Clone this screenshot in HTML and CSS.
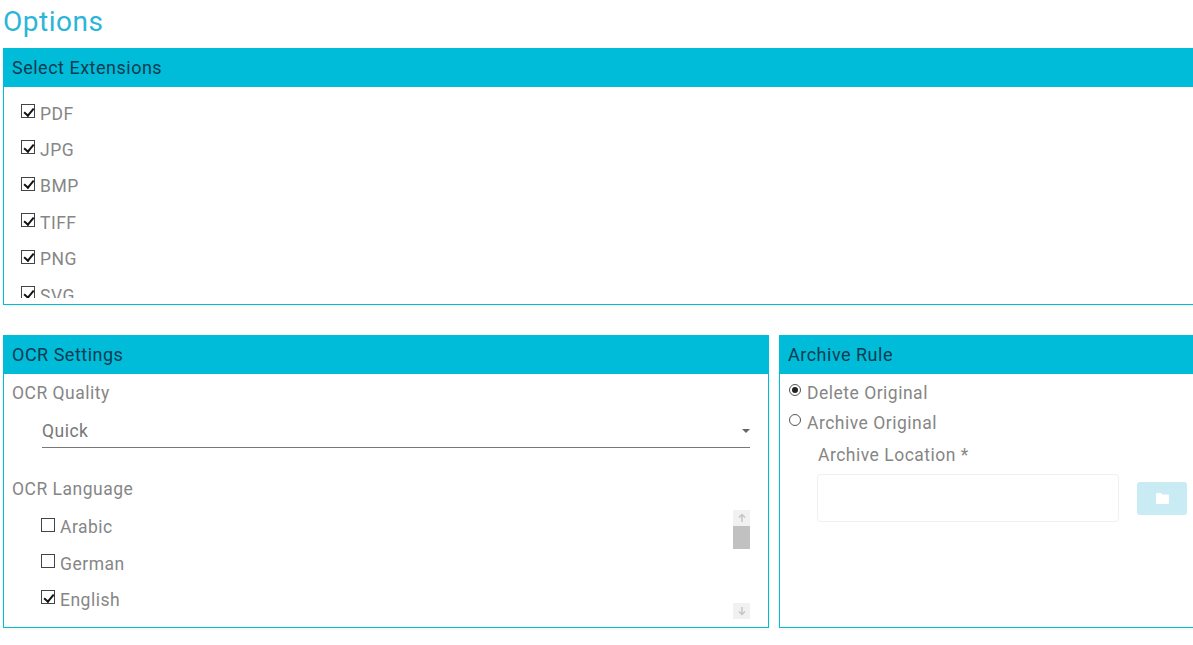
FILE: index.html
```html
<!DOCTYPE html>
<html lang="en">
<head>
  <meta charset="UTF-8">
  <meta name="viewport" content="width=device-width, initial-scale=1.0">
  <title>Options</title>
  <link rel="stylesheet" href="styles.css">
</head>
<body>

<div class="page">
  <h1 class="page-title">Options</h1>

  <!-- Extensions -->
  <section class="panel">
    <div class="panel-header">Select Extensions</div>
    <div class="extension-list">
      <label class="option"><input type="checkbox" checked> PDF</label>
      <label class="option"><input type="checkbox" checked> JPG</label>
      <label class="option"><input type="checkbox" checked> BMP</label>
      <label class="option"><input type="checkbox" checked> TIFF</label>
      <label class="option"><input type="checkbox" checked> PNG</label>
      <label class="option"><input type="checkbox" checked> SVG</label>
    </div>
  </section>

  <div class="settings-row">
    <!-- OCR -->
    <section class="panel">
      <div class="panel-header">OCR Settings</div>
      <div class="ocr-body">
        <div class="field-label">OCR Quality</div>
        <div class="select-box">Quick</div>
        <div class="field-label language-label">OCR Language</div>
        <div class="language-box">
          <div class="language-list">
            <label class="option"><input type="checkbox"> Arabic</label>
            <label class="option"><input type="checkbox"> German</label>
            <label class="option"><input type="checkbox" checked> English</label>
          </div>
          <div class="scrollbar">
            <div class="scroll-btn">
              <svg viewBox="0 0 16 16" width="16" height="16"><path d="M8 12V5M5 7.5 8 4.5l3 3" fill="none" stroke="#c4c4c4" stroke-width="1.4"/></svg>
            </div>
            <div class="scroll-thumb"></div>
            <div class="scroll-track"></div>
            <div class="scroll-btn">
              <svg viewBox="0 0 16 16" width="16" height="16"><path d="M8 4v7M5 8.5l3 3 3-3" fill="none" stroke="#c4c4c4" stroke-width="1.4"/></svg>
            </div>
          </div>
        </div>
      </div>
    </section>

    <!-- Archive -->
    <section class="panel">
      <div class="panel-header">Archive Rule</div>
      <div class="archive-body">
        <label class="radio-option"><input type="radio" name="archive" checked> Delete Original</label>
        <label class="radio-option"><input type="radio" name="archive"> Archive Original</label>
        <div class="location">
          <div class="field-label">Archive Location *</div>
          <div class="location-row">
            <input class="location-input" type="text">
            <button class="folder-btn" type="button">
              <svg viewBox="0 0 16 14" width="15" height="13"><path d="M1 2.5C1 1.7 1.6 1 2.4 1h3.8l1.6 1.8h5.8c.8 0 1.4.6 1.4 1.4v7.4c0 .8-.6 1.4-1.4 1.4H2.4C1.6 12.999 1 12.4 1 11.6z" fill="#fff"/></svg>
            </button>
          </div>
        </div>
      </div>
    </section>
  </div>
</div>

</body>
</html>
```

FILE: styles.css
```css
body {
  font-family: Roboto, 'Liberation Sans', sans-serif;
  margin: 0;
  padding: 0;
  background-color: white;
  color: #868686;
  font-size: 17.5px;
  letter-spacing: 0.5px;
  overflow: hidden;
}

.page {
  width: 1230px;
  height: 645px;
  padding: 0 0 0 3px;
  box-sizing: border-box;
}

.page-title {
  margin: 0;
  height: 48px;
  font-size: 28px;
  font-weight: 400;
  line-height: 44px;
  color: #2bb5d8;
}

.panel {
  border: 1px solid #00bcd4;
  border-top: none;
  box-shadow: 0 1px 3px rgba(0, 0, 0, 0.06);
  background-color: white;
}

.panel-header {
  height: 39px;
  line-height: 39px;
  margin: 0 -1px;
  padding: 0 9px;
  background-color: #00bcd8;
  color: #0d3b52;
  font-size: 18px;
}

.extension-list {
  box-sizing: border-box;
  height: 211px;
  margin-bottom: 6px;
  padding: 8.4px 0 0 17px;
  overflow: hidden;
}

.option {
  display: flex;
  align-items: center;
  gap: 5px;
  height: 36.4px;
}

input[type="checkbox"] {
  appearance: none;
  position: relative;
  flex: none;
  width: 14px;
  height: 14px;
  margin: -5px 0 0 0;
  border: 1px solid #444;
  background-color: white;
  box-sizing: border-box;
}

input[type="checkbox"]:checked::after {
  content: '';
  position: absolute;
  left: 3.5px;
  top: 0.5px;
  width: 3.5px;
  height: 8px;
  border: solid #111;
  border-width: 0 2px 2px 0;
  transform: rotate(40deg);
}

.settings-row {
  display: grid;
  grid-template-columns: 766px 1fr;
  gap: 10px;
  margin-top: 30px;
}

.ocr-body {
  height: 253px;
  padding: 0 18px 0 8px;
  box-sizing: border-box;
}

.field-label {
  height: 39px;
  line-height: 39px;
}

.select-box {
  position: relative;
  margin-left: 30px;
  height: 34px;
  line-height: 36px;
  border-bottom: 1px solid #777;
  color: #777;
}

.select-box::after {
  content: '';
  position: absolute;
  right: 0;
  top: 16px;
  border: 4px solid transparent;
  border-top-color: #666;
}

.language-label {
  margin-top: 22px;
}

.language-box {
  display: flex;
  justify-content: space-between;
  padding-left: 29px;
}

.language-list {
  height: 109px;
  overflow: hidden;
}

.scrollbar {
  display: flex;
  flex-direction: column;
  width: 17px;
  height: 109px;
  margin-top: 1px;
}

.scroll-btn {
  display: flex;
  align-items: center;
  justify-content: center;
  height: 16px;
  background-color: #f1f1f1;
}

.scroll-thumb {
  height: 23px;
  background-color: #c1c1c1;
}

.scroll-track {
  flex: 1;
}

.archive-body {
  height: 253px;
  padding: 4px 0 0 9px;
  box-sizing: border-box;
}

.radio-option {
  display: flex;
  align-items: center;
  gap: 6px;
  height: 30px;
}

input[type="radio"] {
  appearance: none;
  position: relative;
  flex: none;
  width: 12px;
  height: 12px;
  margin: -7px 0 0 0;
  border: 1px solid #555;
  border-radius: 50%;
  box-sizing: border-box;
  background-color: white;
}

input[type="radio"]:checked::after {
  content: '';
  position: absolute;
  left: 2px;
  top: 2px;
  width: 6px;
  height: 6px;
  border-radius: 50%;
  background-color: #222;
}

.location {
  margin-left: 28px;
  padding-top: 1px;
}

.location .field-label {
  height: 35px;
  line-height: 32px;
  padding-left: 1px;
}

.location-row {
  display: flex;
  align-items: center;
  gap: 18px;
}

.location-input {
  width: 302px;
  height: 48px;
  box-sizing: border-box;
  border: 1px solid #f0f0f0;
  border-radius: 4px;
  outline: none;
}

.folder-btn {
  display: flex;
  align-items: center;
  justify-content: center;
  width: 50px;
  height: 33px;
  padding: 0;
  border: none;
  border-radius: 3px;
  background-color: #c9ecf4;
}
```
